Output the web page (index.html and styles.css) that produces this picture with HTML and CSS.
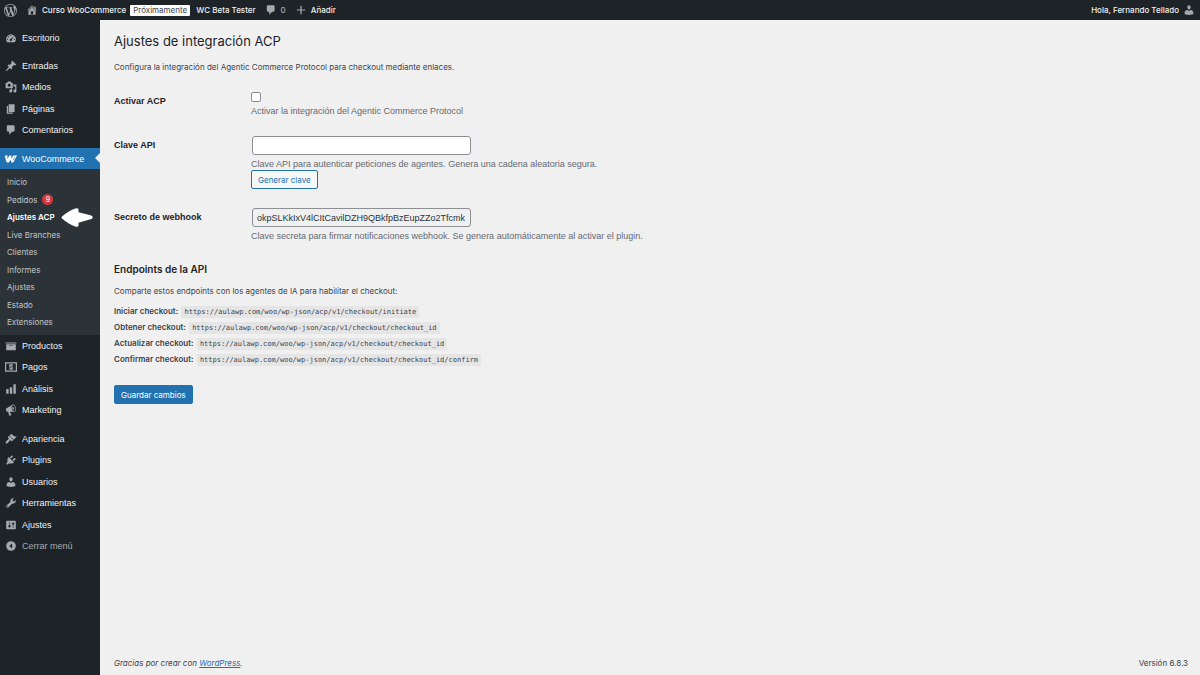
FILE: index.html
```html
<!DOCTYPE html>
<html lang="es">
<head>
  <meta charset="UTF-8" />
  <title>Ajustes de integración ACP</title>
  <meta name="viewport" content="width=device-width, initial-scale=1.0" />
  <link rel="stylesheet" href="styles.css">
</head>
<body>

  <!-- Admin bar -->
  <header class="adminbar">
    <a href="#" class="bar-logo" aria-label="WordPress"><svg class="logo" viewBox="0 0 20 20"><path d="M20 10c0-5.51-4.49-10-10-10C4.48 0 0 4.49 0 10c0 5.52 4.48 10 10 10 5.51 0 10-4.48 10-10zM7.78 15.37L4.37 6.22c.55-.02 1.17-.08 1.17-.08.5-.06.44-1.13-.06-1.11 0 0-1.45.11-2.37.11-.18 0-.37 0-.58-.01C4.12 2.69 6.87 1.11 10 1.11c2.33 0 4.45.87 6.05 2.34-.68-.11-1.65.39-1.65 1.58 0 .74.45 1.36.9 2.1.35.61.55 1.36.55 2.46 0 1.49-1.4 5-1.4 5l-3.03-8.37c.54-.02.82-.17.82-.17.5-.05.44-1.25-.06-1.22 0 0-1.44.12-2.38.12-.87 0-2.33-.12-2.33-.12-.5-.03-.56 1.2-.06 1.22l.92.08 1.26 3.41zM17.41 10c.24-.64.74-1.87.43-4.25.7 1.29 1.05 2.71 1.05 4.25 0 3.29-1.73 6.24-4.4 7.78.97-2.59 1.94-5.2 2.92-7.78zM6.1 18.09C3.12 16.65 1.11 13.53 1.11 10c0-1.3.23-2.48.72-3.59C3.25 10.3 4.67 14.2 6.1 18.09zm4.03-6.63l2.58 6.98c-.86.29-1.76.45-2.71.45-.79 0-1.57-.11-2.29-.33.81-2.38 1.62-4.74 2.42-7.1z"/></svg></a>
    <a href="#" class="bar-site"><svg viewBox="0 0 20 20"><path fill-rule="evenodd" d="M16 8.5l1.53 1.53-1.06 1.06L10 4.6l-6.47 6.47-1.06-1.06L10 2.47l4 4V4h2v4.5zm-6-2.46l6 5.99V18H4v-5.97zM12 17v-5H8v5h4z"/></svg>Curso WooCommerce</a>
    <a href="#" class="bar-badge">Próximamente</a>
    <a href="#" class="bar-beta">WC Beta Tester</a>
    <a href="#" class="bar-comments"><svg viewBox="0 0 20 20"><path d="M5 2h9c1.1 0 2 .9 2 2v7c0 1.1-.9 2-2 2h-2l-5 5v-5H5c-1.1 0-2-.9-2-2V4c0-1.1.9-2 2-2z"/></svg><span>0</span></a>
    <a href="#" class="bar-new"><svg viewBox="0 0 20 20"><path d="M17 9v2h-6v6H9v-6H3V9h6V3h2v6h6z"/></svg>Añadir</a>
    <a href="#" class="bar-user">Hola, Fernando Tellado<svg viewBox="0 0 20 20"><path d="M10 9.25c-2.27 0-2.73-3.44-2.73-3.44C7 4.02 7.82 2 9.97 2c2.16 0 2.98 2.02 2.71 3.81 0 0-.41 3.44-2.68 3.44zm0 2.57L12.72 10c2.39 0 4.52 2.33 4.52 4.53v2.49s-3.65 1.13-7.24 1.13c-3.65 0-7.24-1.13-7.24-1.13v-2.49c0-2.25 1.94-4.48 4.47-4.48z"/></svg></a>
  </header>

  <div class="wrapper">

    <!-- Side menu -->
    <nav class="menu">
      <ul>
        <li><a href="#"><svg viewBox="0 0 20 20"><path fill-rule="evenodd" d="M3.76 17h12.48A8 8 0 1 0 3.76 17zM9 6a1 1 0 1 0 2 0 1 1 0 0 0-2 0zM5 8a1 1 0 1 0 2 0 1 1 0 0 0-2 0zM3 12a1 1 0 1 0 2 0 1 1 0 0 0-2 0zM15 12a1 1 0 1 0 2 0 1 1 0 0 0-2 0zM14.5 7L11.6 12.3a2 2 0 1 1-1.7-1.1z"/></svg>Escritorio</a></li>
      </ul>
      <ul>
        <li><a href="#"><svg viewBox="0 0 20 20"><path d="M10.44 3.02l1.82-1.82 6.36 6.35-1.83 1.82c-1.05-.68-2.48-.57-3.41.36l-.75.75c-.92.93-1.04 2.35-.35 3.41l-1.83 1.82-2.41-2.41-2.8 2.79c-.42.42-3.38 2.71-3.8 2.29s1.86-3.39 2.28-3.81l2.79-2.79L4.1 9.36l1.83-1.82c1.05.69 2.48.57 3.4-.36l.75-.75c.93-.92 1.05-2.35.36-3.41z"/></svg>Entradas</a></li>
        <li><a href="#"><svg viewBox="0 0 20 20"><path fill-rule="evenodd" d="M13 11V4c0-.55-.45-1-1-1h-1.67L9 1H5L3.67 3H2c-.55 0-1 .45-1 1v7c0 .55.45 1 1 1h10c.55 0 1-.45 1-1zM7 4.5c1.38 0 2.5 1.12 2.5 2.5S8.38 9.5 7 9.5 4.5 8.38 4.5 7 5.62 4.5 7 4.5zM14 6h5v10.5c0 1.38-1.12 2.5-2.5 2.5S14 17.88 14 16.5s1.12-2.5 2.5-2.5c.17 0 .34.02.5.05V9h-3V6zm-4 8.05V13h2v3.5c0 1.38-1.12 2.5-2.5 2.5S7 17.88 7 16.5 8.12 14 9.5 14c.17 0 .34.02.5.05z"/></svg>Medios</a></li>
        <li><a href="#"><svg viewBox="0 0 20 20"><path d="M6 15V2h10v13H6zm-1 1h8v2H3V5h2v11z"/></svg>Páginas</a></li>
        <li><a href="#"><svg viewBox="0 0 20 20"><path d="M5 2h9c1.1 0 2 .9 2 2v7c0 1.1-.9 2-2 2h-2l-5 5v-5H5c-1.1 0-2-.9-2-2V4c0-1.1.9-2 2-2z"/></svg>Comentarios</a></li>
      </ul>
      <ul class="menu-woo">
        <li class="current"><a href="#"><svg viewBox="0 0 20 20"><path d="M0 4h4.2l-.4 6.1L7.4 4h3.2l.1 6 3-6H20l-6.2 12h-3.3l-.7-5.2L6.4 16H3.1C1.7 13.3.4 8.7 0 4z"/><path class="cut" d="M15.6 7.3l-2 4.1c-.3.7.7.9 1.1.2l1.9-3.8c.3-.7-.6-1.1-1-.5z"/></svg>WooCommerce</a></li>
      </ul>
      <ul class="submenu">
        <li><a href="#">Inicio</a></li>
        <li><a href="#">Pedidos <span class="count">9</span></a></li>
        <li class="active"><a href="#">Ajustes ACP</a><svg class="pointer" viewBox="0 0 32 19"><path d="M1 8.5C5 5 9.500 2 15 .3c1.800-.5 2.500.2 2.500 1.700v2.200l12 3c3 .8 3 3.400 0 4.100l-12 3.500V17c0 1.500-.8 2.200-2.500 1.700C9.500 17 5 14 1 10.500c-.7-.7-.7-1.300 0-2z"/></svg></li>
        <li><a href="#">Live Branches</a></li>
        <li><a href="#">Clientes</a></li>
        <li><a href="#">Informes</a></li>
        <li><a href="#">Ajustes</a></li>
        <li><a href="#">Estado</a></li>
        <li><a href="#">Extensiones</a></li>
      </ul>
      <ul class="menu-store">
        <li><a href="#"><svg viewBox="0 0 20 20"><path fill-rule="evenodd" d="M19 4v2H1V4h18zM2 7h16v10H2V7zm11 3V9H7v1h6z"/></svg>Productos</a></li>
        <li><a href="#"><svg viewBox="0 0 20 20"><path fill-rule="evenodd" d="M0 2h20v16H0V2zm2 2v12h16V4H2z"/><path d="M9 5h2v1h2v2H9v1h4v5h-2v1H9v-1H7v-2h4v-1H7V6h2z"/></svg>Pagos</a></li>
        <li><a href="#"><svg viewBox="0 0 20 20"><path d="M18 18V2h-4v16h4zm-6 0V7H8v11h4zm-6 0v-8H2v8h4z"/></svg>Análisis</a></li>
        <li><a href="#"><svg viewBox="0 0 20 20"><path fill-rule="evenodd" d="M18.15 5.94c.46 1.62.38 3.22-.02 4.48-.42 1.28-1.26 2.18-2.3 2.48-.16.06-.26.06-.4.06-.06.02-.12.02-.18.02-.06.02-.14.02-.22.02h-6.8l2.22 5.5c.02.14-.06.26-.14.34-.08.1-.24.16-.34.16H6.95c-.1 0-.26-.06-.34-.16-.08-.08-.16-.2-.14-.34l-1-5.5H4.25l-.02-.02c-.5.06-1.08-.18-1.54-.62s-.88-1.08-1.06-1.88c-.24-.8-.2-1.56-.02-2.2.18-.62.58-1.08 1.06-1.3l.02-.02 9-5.4c.1-.06.18-.1.24-.16.06-.04.14-.08.24-.12.16-.08.28-.12.5-.18 1.04-.3 2.24.1 3.22.98s1.84 2.24 2.26 3.86zm-2.58 5.98h-.02c.4-.1.74-.34 1.04-.7.58-.7.86-1.76.86-3.04 0-.64-.1-1.3-.28-1.98-.34-1.36-1.02-2.5-1.78-3.24s-1.68-1.1-2.46-.88c-.82.22-1.4.96-1.7 2-.32 1.04-.28 2.36.06 3.72.38 1.36 1 2.5 1.8 3.24.78.74 1.62 1.1 2.48.88zm-2.54-7.08c.22-.04.42-.02.62.04.38.16.76.48 1.02 1s.42 1.2.42 1.78c0 .3-.04.56-.12.8-.18.48-.44.84-.86.94-.34.1-.8-.06-1.14-.4s-.64-.86-.78-1.5c-.18-.62-.12-1.24.02-1.72s.48-.84.82-.94z"/></svg>Marketing</a></li>
      </ul>
      <ul>
        <li><a href="#"><svg viewBox="0 0 20 20"><path d="M14.48 11.06L7.41 3.99l1.5-1.5c.5-.56 2.3-.47 3.51.32 1.21.8 1.43 1.28 2.91 2.1 1.18.64 2.45 1.26 4.45.85zm-.71.71L6.7 4.7 4.93 6.47c-.39.39-.39 1.02 0 1.41l1.06 1.06c.39.39.39 1.03 0 1.42-.6.6-1.43 1.11-2.21 1.69-.35.26-.7.53-1.01.84C1.43 14.23.4 16.08 1.4 17.07c.99 1 2.84-.03 4.18-1.36.31-.31.58-.66.85-1.02.57-.78 1.08-1.61 1.69-2.21.39-.39 1.02-.39 1.41 0l1.06 1.06c.39.39 1.02.39 1.41 0z"/></svg>Apariencia</a></li>
        <li><a href="#"><svg viewBox="0 0 20 20"><path d="M13.11 4.36L9.87 7.6 8 5.73l3.24-3.24c.35-.34 1.05-.2 1.56.32.52.51.66 1.21.31 1.55zm-8 1.77l.91-1.12 9.01 9.01-1.19.84c-.71.71-2.63 1.16-3.82 1.16H6.14L4.9 17.26c-.59.59-1.54.59-2.12 0-.59-.58-.59-1.53 0-2.12l1.24-1.24v-3.88c0-1.13.4-3.19 1.09-3.89zm7.26 3.97l3.24-3.24c.34-.35 1.04-.21 1.55.31.52.51.66 1.21.31 1.55l-3.24 3.25z"/></svg>Plugins</a></li>
        <li><a href="#"><svg viewBox="0 0 20 20"><path d="M10 9.25c-2.27 0-2.73-3.44-2.73-3.44C7 4.02 7.82 2 9.97 2c2.16 0 2.98 2.02 2.71 3.81 0 0-.41 3.44-2.68 3.44zm0 2.57L12.72 10c2.39 0 4.52 2.33 4.52 4.53v2.49s-3.65 1.13-7.24 1.13c-3.65 0-7.24-1.13-7.24-1.13v-2.49c0-2.25 1.94-4.48 4.47-4.48z"/></svg>Usuarios</a></li>
        <li><a href="#"><svg viewBox="0 0 20 20"><path fill-rule="evenodd" d="M16.68 9.77c-1.34 1.34-3.3 1.67-4.95.99l-5.41 6.52c-.99.99-2.59.99-3.58 0s-.99-2.59 0-3.57l6.52-5.42c-.68-1.65-.35-3.61.99-4.95 1.28-1.28 3.12-1.62 4.72-1.06l-2.89 2.89 2.82 2.82 2.86-2.87c.53 1.58.18 3.39-1.08 4.65zM3.81 16.21c.4.39 1.04.39 1.43 0 .4-.4.4-1.04 0-1.43-.39-.4-1.03-.4-1.43 0-.39.39-.39 1.03 0 1.43z"/></svg>Herramientas</a></li>
        <li><a href="#"><svg viewBox="0 0 20 20"><path fill-rule="evenodd" d="M18 16V4c0-.55-.45-1-1-1H3c-.55 0-1 .45-1 1v12c0 .55.45 1 1 1h14c.55 0 1-.45 1-1zM8 11h1c.55 0 1 .45 1 1s-.45 1-1 1H8v1.5c0 .28-.22.5-.5.5s-.5-.22-.5-.5V13H6c-.55 0-1-.45-1-1s.45-1 1-1h1V5.5c0-.28.22-.5.5-.5s.5.22.5.5V11zm5-2h-1c-.55 0-1-.45-1-1s.45-1 1-1h1V5.5c0-.28.22-.5.5-.5s.5.22.5.5V7h1c.55 0 1 .45 1 1s-.45 1-1 1h-1v5.5c0 .28-.22.5-.5.5s-.5-.22-.5-.5V9z"/></svg>Ajustes</a></li>
        <li><button type="button" class="collapse"><svg viewBox="0 0 20 20"><path fill-rule="evenodd" d="M10 2a8 8 0 1 0 0 16 8 8 0 0 0 0-16zM12 6v8l-5-4z"/></svg>Cerrar menú</button></li>
      </ul>
    </nav>

    <!-- Settings page -->
    <main class="content">
      <h1>Ajustes de integración ACP</h1>
      <p class="intro">Configura la integración del Agentic Commerce Protocol para checkout mediante enlaces.</p>

      <form>
        <div class="form-row">
          <label for="acp_enabled">Activar ACP</label>
          <div class="field">
            <input type="checkbox" id="acp_enabled" />
            <p class="description">Activar la integración del Agentic Commerce Protocol</p>
          </div>
        </div>
        <div class="form-row">
          <label for="api_key">Clave API</label>
          <div class="field">
            <input type="text" id="api_key" />
            <p class="description">Clave API para autenticar peticiones de agentes. Genera una cadena aleatoria segura.</p>
            <button type="button" class="button">Generar clave</button>
          </div>
        </div>
        <div class="form-row">
          <label for="webhook_secret">Secreto de webhook</label>
          <div class="field">
            <input type="text" id="webhook_secret" class="readonly" value="okpSLKkIxV4lCItCavilDZH9QBkfpBzEupZZo2Tfcmk" readonly />
            <p class="description">Clave secreta para firmar notificaciones webhook. Se genera automáticamente al activar el plugin.</p>
          </div>
        </div>

        <h2>Endpoints de la API</h2>
        <p>Comparte estos endpoints con los agentes de IA para habilitar el checkout:</p>
        <ul class="endpoints">
          <li><strong>Iniciar checkout:</strong> <code>https://aulawp.com/woo/wp-json/acp/v1/checkout/initiate</code></li>
          <li><strong>Obtener checkout:</strong> <code>https://aulawp.com/woo/wp-json/acp/v1/checkout/checkout_id</code></li>
          <li><strong>Actualizar checkout:</strong> <code>https://aulawp.com/woo/wp-json/acp/v1/checkout/checkout_id</code></li>
          <li><strong>Confirmar checkout:</strong> <code>https://aulawp.com/woo/wp-json/acp/v1/checkout/checkout_id/confirm</code></li>
        </ul>

        <button type="submit" class="button button-primary">Guardar cambios</button>
      </form>

      <footer>
        <em>Gracias por crear con <a href="#">WordPress</a>.</em>
        <span>Versión 6.8.3</span>
      </footer>
    </main>
  </div>

</body>
</html>
```
FILE: styles.css
```css
* {
  box-sizing: border-box;
}
body {
  margin: 0;
  min-height: 100vh;
  display: flex;
  flex-direction: column;
  background: #f0f0f1;
  color: #3c434a;
  font-family: Inter, "Liberation Sans", sans-serif;
  font-size: 8px;
  line-height: 12px;
}
ul, p, h1, h2 {
  margin: 0;
  padding: 0;
}
ul {
  list-style: none;
}
svg {
  width: 12px;
  height: 12px;
  fill: #a7aaad;
  flex-shrink: 0;
}
button, input {
  font: inherit;
}

/* Admin bar */
.adminbar {
  display: flex;
  align-items: center;
  height: 20px;
  padding: 0 5px 0 4px;
  background: #1d2327;
}
.adminbar a {
  display: flex;
  align-items: center;
  color: #f0f0f1;
  font-weight: 500;
  text-decoration: none;
  white-space: nowrap;
}
.adminbar .bar-logo svg {
  width: 13px;
  height: 13px;
}
.bar-site {
  gap: 4px;
  margin-left: 9px;
}
.adminbar .bar-badge {
  margin: 0 6px 0 4px;
  padding: 0 3px;
  line-height: 11px;
  border-radius: 1px;
  background: #fff;
  color: #3c434a;
  font-weight: 400;
}
.bar-comments {
  gap: 4px;
  margin-left: 9px;
}
.adminbar .bar-comments span {
  color: #a7aaad;
}
.bar-new {
  gap: 4px;
  margin-left: 9px;
}
.bar-user {
  gap: 4px;
  margin-left: auto;
}

.wrapper {
  flex: 1;
  display: flex;
}

/* Side menu */
.menu {
  width: 100px;
  flex-shrink: 0;
  padding-top: 7px;
  background: #1d2327;
}
.menu ul + ul {
  margin-top: 7px;
}
.menu a, .collapse {
  display: flex;
  align-items: center;
  gap: 5px;
  width: 100%;
  height: 21px;
  padding: 0 5px;
  border: none;
  background: none;
  color: #f0f0f1;
  font-family: "Liberation Sans", Arial, sans-serif;
  font-size: 9px;
  text-decoration: none;
  text-align: left;
}
.menu li:nth-child(even) a {
  height: 22px;
}
.menu .collapse {
  color: #a7aaad;
}
.menu .current {
  position: relative;
}
.menu .current a {
  background: #2271b1;
  color: #fff;
}
.current svg {
  fill: #fff;
}
.current .cut {
  fill: #2271b1;
}
.current::after {
  content: "";
  position: absolute;
  top: 5px;
  right: 0;
  border: 5px solid transparent;
  border-left: none;
  border-right-color: #f0f0f1;
}
.menu .submenu {
  margin: 0;
  padding: 4px 0;
  background: #2c3338;
}
.menu .submenu a {
  height: 18px;
  padding: 0 7px;
  color: #c3c4c7;
  font-family: inherit;
  font-size: 8px;
}
.menu .submenu li:nth-child(even) a {
  height: 17px;
}
.submenu .active {
  position: relative;
}
.menu .submenu .active a {
  color: #fff;
  font-weight: 600;
}
.count {
  width: 11px;
  border-radius: 6px;
  background: #d63638;
  color: #fff;
  font-size: 7px;
  line-height: 11px;
  text-align: center;
}
.pointer {
  position: absolute;
  left: 61px;
  top: 0;
  width: 32px;
  height: 19px;
  fill: #fff;
}
.menu .menu-store {
  margin-top: 0;
}

/* Settings page */
.content {
  flex: 1;
  display: flex;
  flex-direction: column;
  padding: 11px 12px 6px 14px;
}
h1 {
  color: #1d2327;
  font-size: 13px;
  font-weight: 400;
  line-height: 20px;
}
.intro {
  margin: 10px 0 19px;
}
.form-row {
  display: flex;
  margin-bottom: 19px;
}
.form-row > label {
  width: 137px;
  flex-shrink: 0;
  padding-top: 3px;
  color: #1d2327;
  font-family: "Liberation Sans", Arial, sans-serif;
  font-size: 9px;
  font-weight: 600;
}
.field {
  display: flex;
  flex-direction: column;
  align-items: flex-start;
}
.field input[type="checkbox"] {
  appearance: none;
  width: 10px;
  height: 10px;
  margin: 0 0 3px;
  border: 1px solid #8c8f94;
  border-radius: 2px;
  background: #fff;
}
.field input[type="text"] {
  width: 219px;
  height: 19px;
  margin: 0 0 3px 1px;
  padding: 0 3px 0 4px;
  border: 1px solid #8c8f94;
  border-radius: 3px;
  background: #fff;
  color: #2c3338;
  font-family: "Liberation Sans", Arial, sans-serif;
  font-size: 9px;
}
.field input.readonly {
  background: #f0f0f1;
}
.description {
  color: #646970;
  font-family: "Liberation Sans", Arial, sans-serif;
  font-size: 9px;
}
.button {
  height: 19px;
  padding: 0 6px;
  border: 1px solid #2271b1;
  border-radius: 2px;
  background: #f6f7f7;
  color: #2271b1;
  cursor: pointer;
}
.button-primary {
  background: #2271b1;
  color: #fff;
}
h2 {
  margin: 20px 0 9px;
  color: #1d2327;
  font-size: 10px;
  font-weight: 600;
  line-height: 14px;
}
.endpoints {
  margin: 6px 0 18px;
}
.endpoints li {
  line-height: 16px;
}
strong {
  font-weight: 600;
}
code {
  margin-left: 1px;
  padding: 2px 3px;
  background: #e5e5e6;
  font-family: "DejaVu Sans Mono", monospace;
  font-size: 7px;
  line-height: 1;
}

footer {
  display: flex;
  justify-content: space-between;
  margin-top: auto;
}
footer a {
  color: #2271b1;
}
```
